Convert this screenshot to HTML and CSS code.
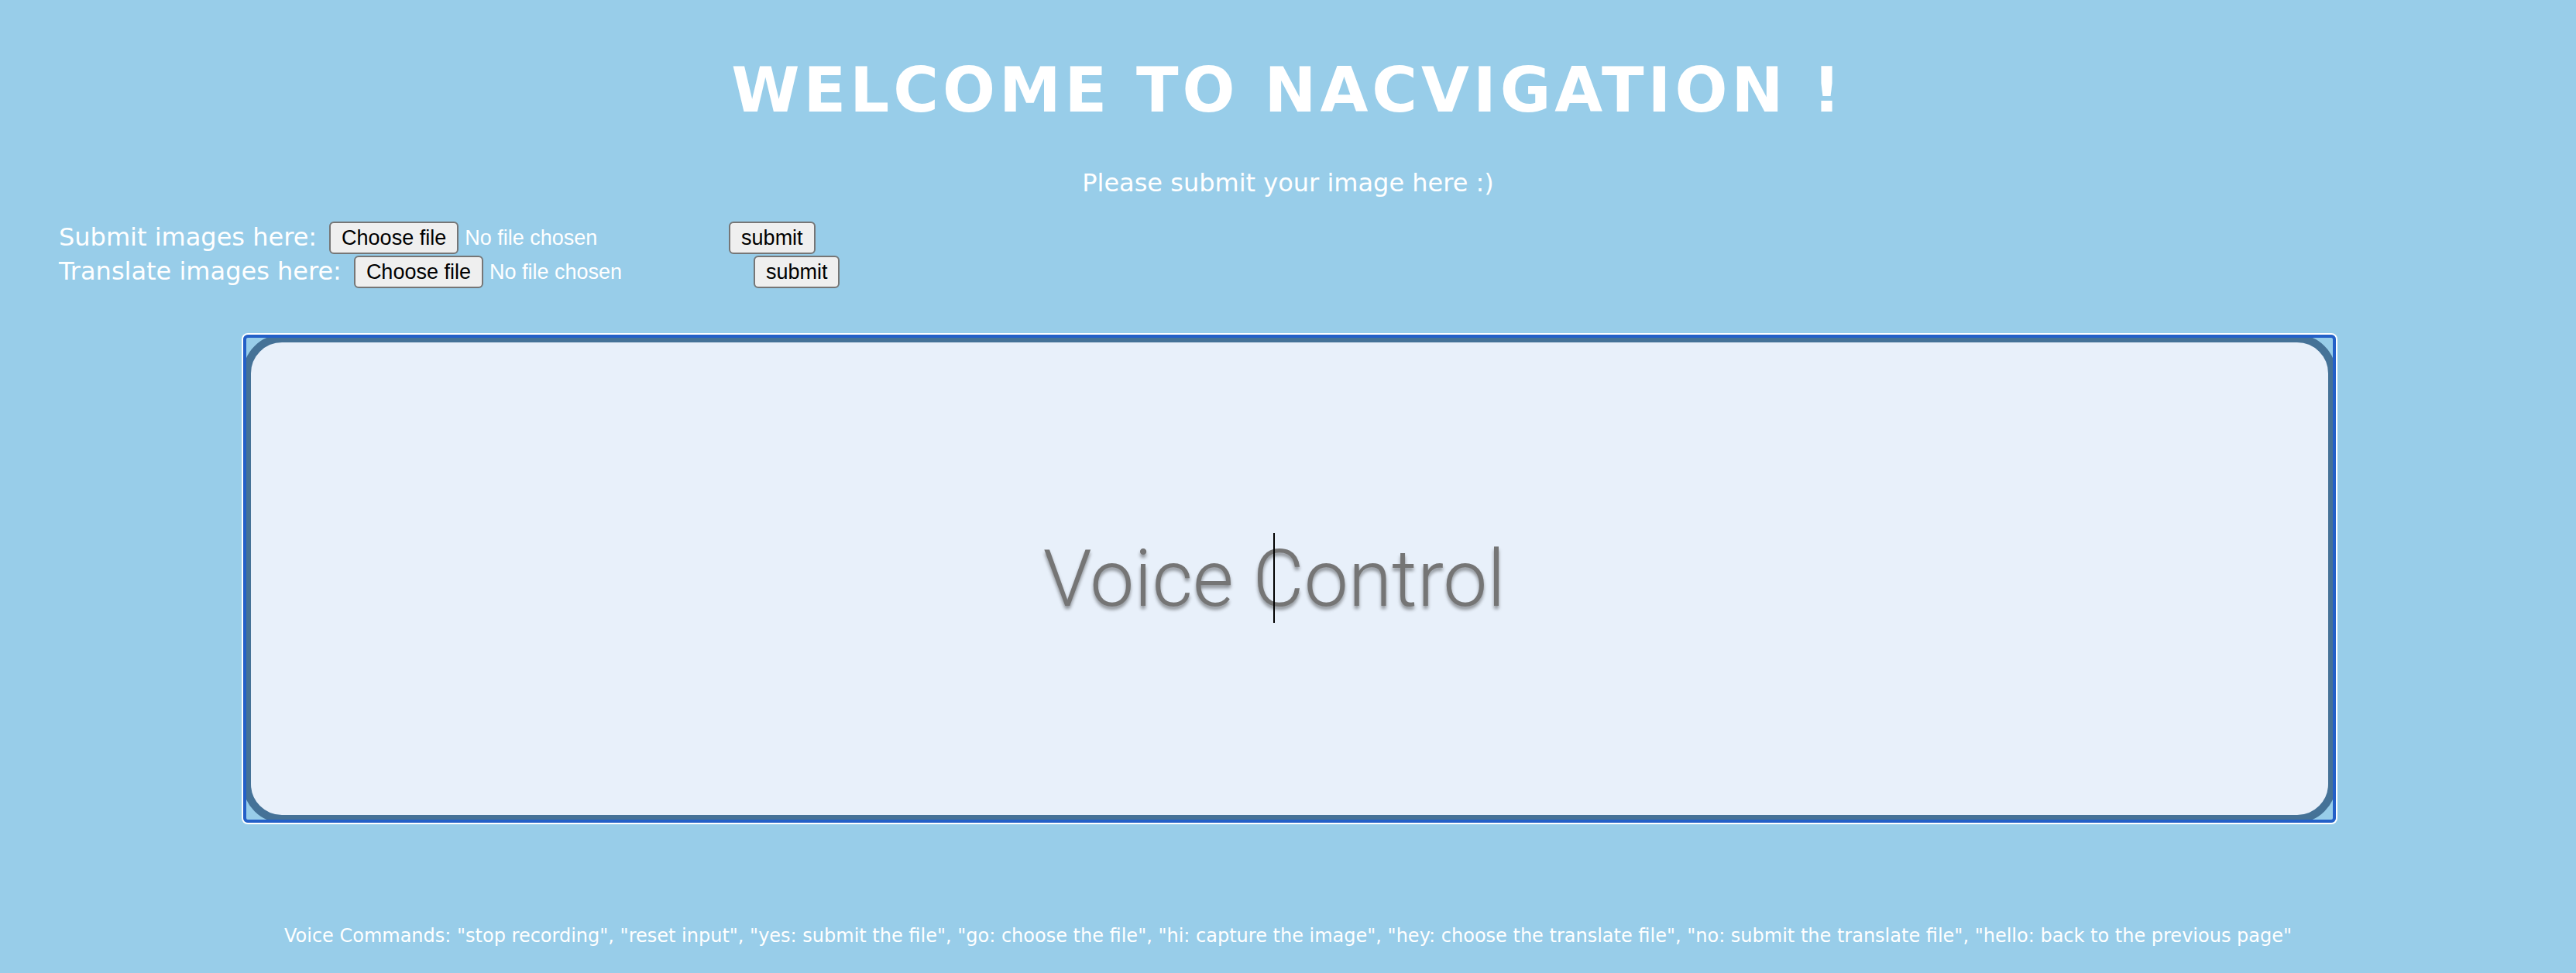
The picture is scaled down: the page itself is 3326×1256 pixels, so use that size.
FILE: index.html
```html
<!DOCTYPE html>
<html lang="en">
<head>
  <meta charset="utf-8">
  <meta name="viewport" content="width=device-width, initial-scale=1">
  <title>Nacvigation</title>
  <link rel="stylesheet" href="styles.css">
</head>
<body>
  <header class="intro">
    <h1 class="title">WELCOME TO NACVIGATION !</h1>
    <p class="subtitle">Please submit your image here :)</p>
  </header>
  <main>
    <div class="uploads">
      <form class="upload">
        <label for="image-file">Submit images here:</label>
        <div class="picker">
          <span class="btn" aria-hidden="true">Choose file</span>
          <span aria-hidden="true">No file chosen</span>
          <input class="picker-input" type="file" id="image-file">
        </div>
        <button class="btn" type="submit">submit</button>
      </form>
      <form class="upload">
        <label for="translate-file">Translate images here:</label>
        <div class="picker">
          <span class="btn" aria-hidden="true">Choose file</span>
          <span aria-hidden="true">No file chosen</span>
          <input class="picker-input" type="file" id="translate-file">
        </div>
        <button class="btn" type="submit">submit</button>
      </form>
    </div>
    <div class="voice">
      <input class="voice-input" type="text" placeholder="Voice Control" aria-label="Voice Control">
      <span class="caret"></span>
    </div>
  </main>
  <footer class="commands">Voice Commands: "stop recording", "reset input", "yes: submit the file", "go: choose the file", "hi: capture the image", "hey: choose the translate file", "no: submit the translate file", "hello: back to the previous page"</footer>
</body>
</html>
```
FILE: styles.css
```css
* {
  box-sizing: border-box;
}

body {
  margin: 0;
  padding: 68px 76px 26px;
  background: #98cde9;
  color: #fff;
  font-family: Verdana, "DejaVu Sans", sans-serif;
  font-size: 32px;
  line-height: 40px;
}

.intro {
  text-align: center;
}

.title {
  margin: 0;
  font-size: 80px;
  line-height: 98px;
  letter-spacing: 5px;
}

.subtitle {
  margin: 50px 0 0;
}

.uploads {
  display: flex;
  flex-direction: column;
  gap: 2px;
  margin-top: 30px;
}

.upload {
  display: flex;
  align-items: center;
  gap: 10px;
}

.upload label {
  padding: 0 6px 2px 0;
}

.picker {
  position: relative;
  display: flex;
  align-items: center;
  gap: 8px;
  width: 506px;
  font-family: Arial, "Liberation Sans", sans-serif;
  font-size: 27px;
}

.picker-input {
  position: absolute;
  inset: 0;
  width: 100%;
  opacity: 0;
}

.btn {
  height: 42px;
  padding: 0 14px;
  border: 2px solid #767676;
  border-radius: 6px;
  background: #efefef;
  color: #000;
  font-family: Arial, "Liberation Sans", sans-serif;
  font-size: 27px;
  line-height: 38px;
}

.voice {
  position: relative;
  margin: 60px 234px 0 238px;
}

.voice-input {
  display: block;
  width: 100%;
  height: 630px;
  padding: 0 40px 0 0;
  border: 10px solid #457297;
  border-radius: 50px;
  outline: none;
  background: #e8f0fa;
  color: #000;
  font-family: "Helvetica Neue", Roboto, sans-serif;
  font-size: 102px;
  font-weight: 300;
  text-align: center;
  text-shadow: 0 4px 4px rgba(0, 0, 0, 0.4);
}

.voice-input::placeholder {
  color: #757575;
  opacity: 1;
}

/* focus ring over the rounded field */
.voice::after {
  content: "";
  position: absolute;
  inset: 0;
  border: 4px solid #2460c8;
  border-radius: 6px;
  box-shadow: 0 0 0 2px #fff;
  pointer-events: none;
}

.caret {
  position: absolute;
  top: 256px;
  left: calc(50% - 21px);
  width: 2px;
  height: 116px;
  background: #000;
}

.commands {
  margin-top: 126px;
  font-size: 24px;
  text-align: center;
}
```
